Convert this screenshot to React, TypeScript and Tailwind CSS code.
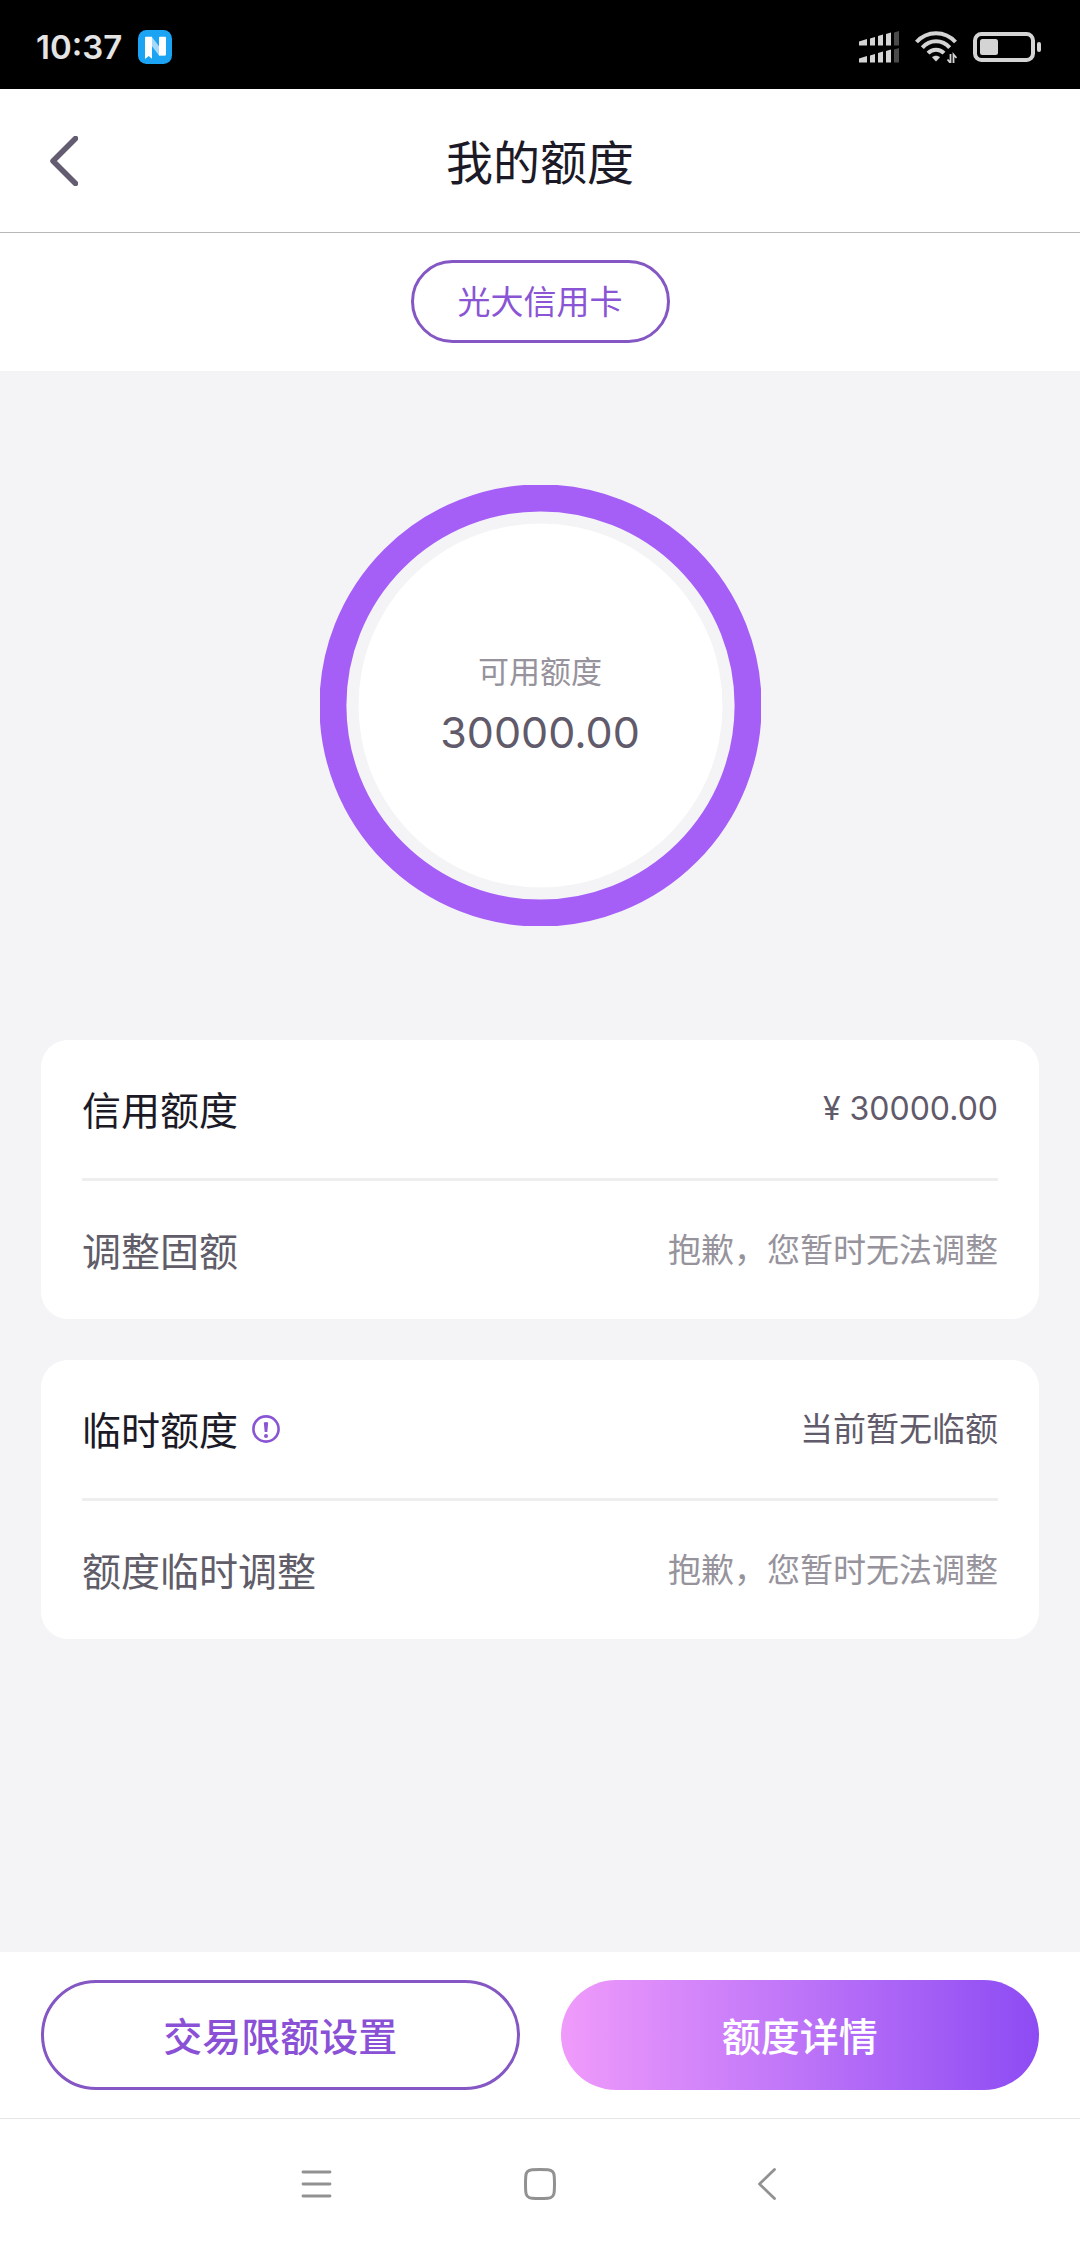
import type { ReactNode } from 'react';

function StatusBar() {
  return (
    <div className="bg-black h-[89px] pl-9 pr-[39px] flex items-center justify-between">
      <div className="flex items-center gap-4 pt-1">
        <p className="text-[#e4e4e4] text-[33px] leading-[40px] font-semibold">10:37</p>
        <svg className="w-[34px] h-[34px]" viewBox="0 0 34 34" aria-hidden="true">
          <rect width="34" height="34" rx="8.5" fill="#1ba4f4" />
          <path d="M7 7h7l14 18.5h-7z" fill="#a5d9fb" />
          <path d="M8 6.7h6v22L10.7 26 7 29V7.7a1 1 0 0 1 1-1z" fill="#fff" />
          <path d="M22 6.7h5a1 1 0 0 1 1 1V24a1.5 1.5 0 0 1-1.5 1.5H21V7.7a1 1 0 0 1 1-1z" fill="#fff" />
        </svg>
      </div>

      <div className="flex items-center gap-4 pt-1">
        <svg className="w-10 h-8" viewBox="0 0 40 32" aria-hidden="true">
          <g id="bars">
            <path d="M0 10.5l8-2.500v6.500H0zM11 7.500l5-1.500v8.500h-5zM19 5l5-1.500v11h-5zM27 3l5-1.500v13h-5z" fill="#d4d4d4" />
            <path d="M35 1.500L40 0v14.500h-5z" fill="#4a4a4a" />
          </g>
          <use href="#bars" y="17" />
        </svg>
        <svg className="w-[42px] h-8" viewBox="0 0 42 32" aria-hidden="true">
          <g fill="none" stroke="#d4d4d4" strokeWidth="4">
            <path d="M1.500 11C12-.800 30-.800 40.500 11" />
            <path d="M7.300 16.600c7.500-8.400 20-8.400 27.400 0" />
            <path d="M13 22.200c4.500-4.700 11.500-4.700 16 0" />
          </g>
          <path d="M17 26.300c2.300-2 5.700-2 8 0L21 30.500z" fill="#d4d4d4" />
          <path d="M35.500 23v9l-3-3.500M38.500 32v-8.500l3 3.500" fill="none" stroke="#d4d4d4" strokeWidth="1.800" />
        </svg>
        <svg className="w-[68px] h-[30px]" viewBox="0 0 68 30" aria-hidden="true">
          <rect x="2" y="2" width="58" height="26" rx="6.500" fill="none" stroke="#d4d4d4" strokeWidth="4" />
          <rect x="7" y="7" width="18" height="16" rx="2.500" fill="#d4d4d4" />
          <rect x="64" y="10" width="4" height="10" rx="2" fill="#d4d4d4" />
        </svg>
      </div>
    </div>
  );
}

function Header() {
  return (
    <header className="h-36 px-[41px] grid grid-cols-[1fr_auto_1fr] items-center border-b border-[#b8b8b8]">
      <button type="button" aria-label="返回" className="w-[46px] h-16 flex items-center justify-center">
        <svg className="w-7 h-[50px]" viewBox="0 0 28 50" aria-hidden="true">
          <path d="M25.500 2.500L3 25l22.500 22.500" fill="none" stroke="#645c70" strokeWidth="5.500" strokeLinecap="round" strokeLinejoin="round" />
        </svg>
      </button>
      <h1 className="text-[#1c1a27] text-[47px] leading-[56px] pt-1">我的额度</h1>
    </header>
  );
}

function Gauge() {
  return (
    <div className="w-[441px] h-[441px] grid place-items-center">
      <svg className="w-full h-full col-start-1 row-start-1" viewBox="0 0 441 441" aria-hidden="true">
        <circle cx="220.500" cy="220.500" r="207.600" fill="none" stroke="#a55ff7" strokeWidth="27" />
        <circle cx="220.500" cy="220.500" r="182" fill="#fff" />
      </svg>
      <div className="col-start-1 row-start-1 flex flex-col items-center gap-1">
        <p className="text-[#96939c] text-[31px] leading-[48px]">可用额度</p>
        <p className="text-[#605a6a] text-[43px] leading-[64px]">30000.00</p>
      </div>
    </div>
  );
}

function Row({ label, labelClass, value, valueClass, children }: {
  label: string;
  labelClass: string;
  value: string;
  valueClass: string;
  children?: ReactNode;
}) {
  return (
    <div className="h-[138px] box-content flex items-center justify-between">
      <div className="flex items-center gap-3.5">
        <p className={`text-[39px] leading-[48px] pt-1 ${labelClass}`}>{label}</p>
        {children}
      </div>
      <p className={`leading-[48px] ${valueClass}`}>{value}</p>
    </div>
  );
}

function Card({ children }: { children: ReactNode }) {
  return (
    <section className="bg-white rounded-[27px] px-[41px] flex flex-col divide-y-3 divide-[#eeeeef]">
      {children}
    </section>
  );
}

function SystemNav() {
  return (
    <nav className="h-[130px] border-t border-[#e6e6e6] flex items-center justify-center gap-48">
      <button type="button" aria-label="最近任务">
        <svg className="w-8 h-8" viewBox="0 0 32 32" fill="none" stroke="#919191" strokeWidth="2.800" strokeLinecap="round" aria-hidden="true">
          <path d="M3 4h27M3 16h27M3 28h27" />
        </svg>
      </button>
      <button type="button" aria-label="主屏幕">
        <svg className="w-8 h-8" viewBox="0 0 32 32" fill="none" stroke="#919191" strokeWidth="3" aria-hidden="true">
          <path d="M8 1.800Q16 1.200 24 1.800Q29.800 2.200 30.200 8Q30.800 16 30.200 24Q29.800 29.800 24 30.200Q16 30.800 8 30.200Q2.200 29.800 1.800 24Q1.200 16 1.800 8Q2.200 2.200 8 1.800z" />
        </svg>
      </button>
      <button type="button" aria-label="返回上一页">
        <svg className="w-8 h-8" viewBox="0 0 32 32" fill="none" stroke="#919191" strokeWidth="2.800" strokeLinecap="round" strokeLinejoin="round" aria-hidden="true">
          <path d="M26.500 1.500L11.500 16l15 14.500" />
        </svg>
      </button>
    </nav>
  );
}

export default function App() {
  return (
    <div className="min-h-screen bg-white flex flex-col font-['Inter','Noto_Sans_CJK_SC',sans-serif]">
      <StatusBar />
      <Header />

      <div className="pt-[27px] pb-7 flex justify-center">
        <button type="button" className="h-[83px] px-[44px] rounded-full border-3 border-[#8457c4] text-[#8a55d4] text-[33px] leading-[48px]">
          光大信用卡
        </button>
      </div>

      <main className="bg-[#f4f4f7] grow px-[41px] pt-[114px] pb-10 flex flex-col">
        <div className="flex justify-center mb-[114px]">
          <Gauge />
        </div>

        <div className="flex flex-col gap-[41px]">
          <Card>
            <Row label="信用额度" labelClass="text-[#1c1a27]" value="¥ 30000.00" valueClass="text-[32px] text-[#605a6a]" />
            <Row label="调整固额" labelClass="text-[#605d69]" value="抱歉，您暂时无法调整" valueClass="text-[33px] text-[#96939c]" />
          </Card>
          <Card>
            <Row label="临时额度" labelClass="text-[#1c1a27]" value="当前暂无临额" valueClass="text-[33px] text-[#605a6a]">
              <button type="button" aria-label="临时额度说明">
                <svg className="w-7 h-7" viewBox="0 0 28 28" aria-hidden="true">
                  <circle cx="14" cy="14" r="12.600" fill="none" stroke="#8a55d4" strokeWidth="2.600" />
                  <path d="M11.800 7.500Q14 6.500 16.200 7.500L15.300 17h-2.600z" fill="#8a55d4" />
                  <circle cx="14" cy="21" r="2" fill="#8a55d4" />
                </svg>
              </button>
            </Row>
            <Row label="额度临时调整" labelClass="text-[#605d69]" value="抱歉，您暂时无法调整" valueClass="text-[33px] text-[#96939c]" />
          </Card>
        </div>
      </main>

      <div className="px-[41px] py-7 grid grid-cols-2 gap-[41px] text-[39px] leading-[48px] font-medium">
        <button type="button" className="h-[110px] pt-1 rounded-full border-3 border-[#8457c4] text-[#8a50d6]">
          交易限额设置
        </button>
        <button type="button" className="h-[110px] pt-1 rounded-full bg-linear-to-r/srgb from-[#f09bfb] via-[#bd74f8] to-[#8d4bf3] text-white">
          额度详情
        </button>
      </div>

      <SystemNav />
    </div>
  );
}
